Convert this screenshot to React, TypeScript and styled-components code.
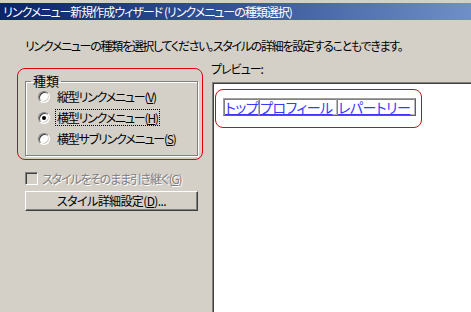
import React from 'react';
import styled, { createGlobalStyle } from 'styled-components';

const GlobalStyle = createGlobalStyle`
  html, body {
    margin: 0;
    padding: 0;
    background: #d4d0c8;
    overflow: hidden;
  }
  body {
    font-family: "Noto Sans CJK JP", "Noto Sans", sans-serif;
    font-size: 12px;
    color: #000000;
    font-feature-settings: "palt";
  }
`;

const Window = styled.div`
  width: 471px;
  height: 312px;
  padding-top: 3px;
  box-sizing: border-box;
  background: #d4d0c8;
  display: flex;
  flex-direction: column;
  overflow: hidden;
`;

const TitleBar = styled.div`
  height: 17px;
  padding-left: 3px;
  background: linear-gradient(to right, #0a246a 0%, #3a5a9c 55%, #6f8fc8 100%);
  color: #ffffff;
  font-size: 12px;
  line-height: 17px;
  letter-spacing: -1px;
  white-space: nowrap;
`;

const Content = styled.div`
  flex: 1;
  padding-left: 17px;
  display: flex;
  flex-direction: column;
  min-height: 0;
`;

const Instruction = styled.div`
  margin-top: 18px;
  padding-left: 8px;
  height: 16px;
  line-height: 16px;
  letter-spacing: -1.3px;
  white-space: nowrap;
`;

const Columns = styled.div`
  flex: 1;
  margin-top: 6px;
  display: flex;
  gap: 8px;
  min-height: 0;
`;

const LeftColumn = styled.div`
  width: 186px;
  display: flex;
  flex-direction: column;
  padding-top: 8px;
`;

const RedOutline = styled.div`
  border: 1px solid #e00010;
  border-radius: 8px;
  height: 92px;
  box-sizing: border-box;
  padding: 5px 3px 2px 7px;
  display: flex;
`;

const GroupBox = styled.fieldset`
  flex: 1;
  margin: 0 1px 1px 0;
  padding: 0 5px;
  border: 1px solid #808080;
  box-shadow: 1px 1px 0 #ffffff, inset 1px 1px 0 #ffffff;
  min-width: 0;
`;

const Legend = styled.legend`
  padding: 0 2px;
  font-size: 13px;
  line-height: 14px;
`;

const RadioList = styled.div`
  margin-top: -2px;
  padding-left: 7px;
  display: flex;
  flex-direction: column;
`;

const RadioRow = styled.label`
  height: 21px;
  display: flex;
  align-items: center;
  gap: 6px;
  white-space: nowrap;
  font-size: 12px;
  letter-spacing: -1.2px;
`;

const RadioCircle = styled.span<{ checked?: boolean }>`
  width: 12px;
  height: 12px;
  box-sizing: border-box;
  border-radius: 50%;
  border: 1px solid;
  border-color: #808080 #ffffff #ffffff #808080;
  box-shadow: inset 1px 1px 0 #404040, inset -1px -1px 0 #d4d0c8;
  background: #ffffff;
  display: flex;
  align-items: center;
  justify-content: center;
  flex-shrink: 0;
  &::after {
    content: '';
    width: 4px;
    height: 4px;
    border-radius: 50%;
    background: ${({ checked }) => (checked ? '#000000' : 'transparent')};
  }
`;

const RadioText = styled.span<{ focused?: boolean }>`
  padding: 0 1px;
  outline: ${({ focused }) => (focused ? '1px dotted #000000' : 'none')};
  line-height: 15px;
`;

const Underline = styled.span`
  text-decoration: underline;
`;

const CheckRow = styled.div`
  margin-top: 11px;
  padding-left: 8px;
  height: 14px;
  display: flex;
  align-items: center;
  gap: 4px;
  white-space: nowrap;
`;

const CheckBox = styled.span`
  width: 13px;
  height: 13px;
  box-sizing: border-box;
  border: 1px solid;
  border-color: #808080 #ffffff #ffffff #808080;
  box-shadow: inset 1px 1px 0 #404040, inset -1px -1px 0 #d4d0c8;
  background: #d4d0c8;
  flex-shrink: 0;
`;

const DisabledText = styled.span`
  color: #808080;
  text-shadow: 1px 1px 0 #ffffff;
  font-size: 12px;
  letter-spacing: -1.2px;
`;

const Button = styled.button`
  margin: 6px 0 0 8px;
  width: 173px;
  height: 20px;
  box-sizing: border-box;
  padding: 0;
  background: #d4d0c8;
  border: 1px solid;
  border-color: #ffffff #404040 #404040 #ffffff;
  box-shadow: inset -1px -1px 0 #808080;
  font-family: inherit;
  font-feature-settings: "palt";
  font-size: 12px;
  letter-spacing: -0.6px;
  color: #000000;
  line-height: 16px;
`;

const RightColumn = styled.div`
  flex: 1;
  display: flex;
  flex-direction: column;
  min-width: 0;
`;

const PreviewLabel = styled.div`
  height: 22px;
  line-height: 18px;
  letter-spacing: -1px;
`;

const PreviewBox = styled.div`
  flex: 1;
  margin-left: 1px;
  background: #ffffff;
  border-top: 1px solid #808080;
  border-left: 1px solid #808080;
  box-shadow: inset 1px 1px 0 #404040;
  padding: 6px 0 0 2px;
`;

const PreviewOutline = styled.div`
  width: 207px;
  height: 39px;
  box-sizing: border-box;
  border: 1px solid #e00010;
  border-radius: 8px;
  padding: 8px 0 0 7px;
`;

const MenuTable = styled.div`
  display: inline-flex;
  border: 1px solid #a0a0a0;
  border-right-color: #606060;
  border-bottom-color: #606060;
  height: 18px;
  box-sizing: border-box;
`;

const MenuCell = styled.a<{ width: number }>`
  width: ${({ width }) => width}px;
  box-sizing: border-box;
  border: 1px solid #b8b8b8;
  border-top-color: #808080;
  border-left-color: #808080;
  color: #3838ff;
  text-decoration: underline;
  font-size: 14px;
  line-height: 14px;
  letter-spacing: -0.5px;
  white-space: nowrap;
  cursor: pointer;
`;

const menuItems = [
  { label: 'トップ', width: 35 },
  { label: 'プロフィール', width: 78 },
  { label: 'レパートリー', width: 78 },
];

function App(): JSX.Element {
  return (
    <>
      <GlobalStyle />
      <Window>
        <TitleBar>リンクメニュー新規作成ウィザード (リンクメニューの種類選択)</TitleBar>
        <Content>
          <Instruction>
            リンクメニューの種類を選択してください。スタイルの詳細を設定することもできます。
          </Instruction>
          <Columns>
            <LeftColumn>
              <RedOutline>
                <GroupBox>
                  <Legend>種類</Legend>
                  <RadioList>
                    <RadioRow>
                      <RadioCircle />
                      <RadioText>
                        縦型リンクメニュー(<Underline>V</Underline>)
                      </RadioText>
                    </RadioRow>
                    <RadioRow>
                      <RadioCircle checked />
                      <RadioText focused>
                        横型リンクメニュー(<Underline>H</Underline>)
                      </RadioText>
                    </RadioRow>
                    <RadioRow>
                      <RadioCircle />
                      <RadioText>
                        横型サブリンクメニュー(<Underline>S</Underline>)
                      </RadioText>
                    </RadioRow>
                  </RadioList>
                </GroupBox>
              </RedOutline>
              <CheckRow>
                <CheckBox />
                <DisabledText>
                  スタイルをそのまま引き継ぐ(<Underline>G</Underline>)
                </DisabledText>
              </CheckRow>
              <Button>
                スタイル詳細設定(<Underline>D</Underline>)...
              </Button>
            </LeftColumn>
            <RightColumn>
              <PreviewLabel>プレビュー:</PreviewLabel>
              <PreviewBox>
                <PreviewOutline>
                  <MenuTable>
                    {menuItems.map((item) => (
                      <MenuCell key={item.label} width={item.width}>
                        {item.label}
                      </MenuCell>
                    ))}
                  </MenuTable>
                </PreviewOutline>
              </PreviewBox>
            </RightColumn>
          </Columns>
        </Content>
      </Window>
    </>
  );
}

export default App;
